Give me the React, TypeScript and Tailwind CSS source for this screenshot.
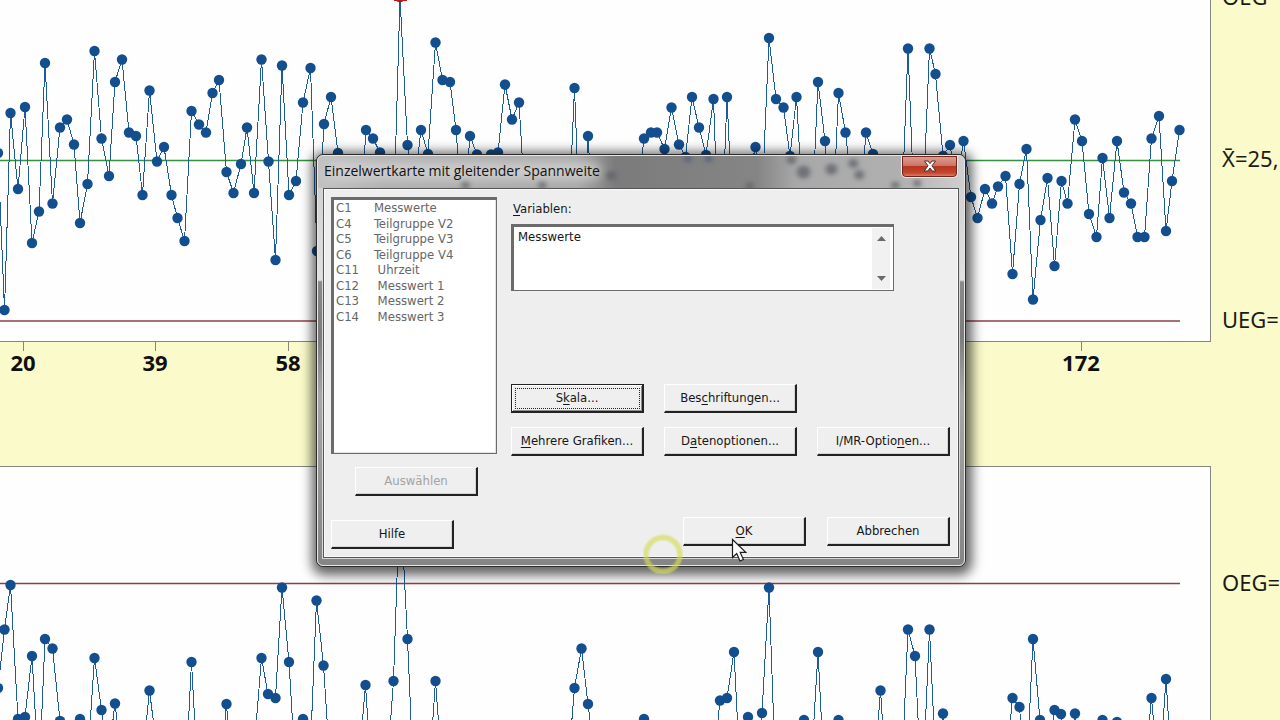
import type { ReactNode } from "react";

type Point = [number, number];

const individualValues: Point[] = [
  [-2, 153], [4.5, 310], [10.5, 113], [18, 189], [25, 107], [32, 243], [39, 211.5], [45, 63], [52.5, 203.5],
  [60, 127.5], [67, 119.5], [74, 144.5], [80, 223], [87.5, 184], [94.5, 51], [101.5, 138.5], [109, 176],
  [115, 82], [122, 59.5], [129, 132.5], [136, 136], [142.5, 195], [149.5, 90.5], [157, 161.5], [164, 147],
  [171.5, 195], [177.5, 218], [184.5, 241], [191.5, 111], [199, 124.5], [206, 132.5], [212.5, 93], [219, 80],
  [226.5, 172], [233.5, 193], [241, 164], [247, 127.5], [254, 193], [261.5, 59.5], [268.5, 161.5], [275.5, 260],
  [282, 65.5], [289, 195], [296, 181], [303, 102.5], [310.5, 68], [317, 251], [324, 124], [331, 97], [338, 153],
  [345, 170], [352, 210], [359, 240], [366, 130], [373, 138.5], [380, 152.5], [387, 180], [393, 240], [400, -3],
  [407.5, 145], [414, 190], [421, 130], [428, 154], [435.5, 42.5], [442.5, 80], [450, 82], [456, 130],
  [463, 220], [470, 136], [477, 154.5], [484, 160], [491, 154.5], [498, 152.5], [505, 84.5], [512, 119.5],
  [519, 102.5], [526, 220], [533, 200], [540, 180], [547, 210], [554, 190], [561, 200], [567, 260], [574.5, 88],
  [581, 260], [588, 136], [595, 250], [602, 190], [609, 200], [616, 180], [623, 210], [630, 190], [637, 200],
  [644, 138.5], [651, 132.5], [657, 132.5], [664.5, 149], [671.5, 107.5], [679, 144.5], [685.5, 157],
  [692, 97], [699, 127.5], [706, 155], [713.5, 99], [720, 280], [727, 97], [734, 250], [741, 200], [748, 180],
  [755.5, 147], [762, 200], [769, 38], [776, 99], [783.5, 107.5], [790, 156], [796.5, 97], [804, 230],
  [811, 240], [818, 82], [825, 141], [832, 240], [838.5, 93], [845.5, 132.5], [852, 190], [859, 220],
  [866, 132.5], [873, 154], [880, 165], [887, 190], [894, 180], [901, 230], [908, 48.5], [915, 230],
  [922, 230], [929.5, 48.5], [935.5, 74], [943, 156], [950, 145], [957, 185], [963.5, 141], [971, 197],
  [977.5, 218], [985, 189], [992, 203.5], [998, 186.5], [1005.5, 176], [1012.5, 274], [1019.5, 184],
  [1026.5, 149], [1033, 299.5], [1040.5, 220], [1047.5, 178], [1054.5, 266], [1061.5, 181], [1067.5, 203.5],
  [1075, 119.5], [1082, 141], [1089, 214], [1096.5, 237], [1102.5, 158], [1109.5, 218], [1117, 141],
  [1124, 192.5], [1131, 203.5], [1137.5, 237], [1144.5, 237], [1151.5, 138.5], [1159, 116], [1166, 231],
  [1172, 181], [1179.5, 130],
];

const movingRanges: Point[] = [
  [-2, 688], [4.5, 629.5], [10.5, 585], [18, 719], [25, 717], [32, 656], [39, 780], [45, 639], [52.5, 648.5],
  [60, 721], [67, 745], [74, 750], [80, 719], [87, 770], [94.5, 658], [101.5, 710], [108, 760], [115, 703.5],
  [122, 760], [136, 750], [142.5, 760], [149.5, 690.5], [157, 750], [185, 790], [191.5, 662], [199, 800],
  [206, 750], [219, 790], [226.5, 704], [233, 790], [247, 740], [254, 750], [261.5, 658], [268, 694],
  [275.5, 698], [282, 587.5], [289, 662], [296, 780], [303, 719], [310, 760], [316.5, 600.5], [323.5, 665.5],
  [331, 780], [359, 760], [365.5, 685], [373, 800], [387, 770], [393.5, 681], [400, 490], [407.5, 639],
  [414, 790], [428, 790], [435.5, 681], [442, 770], [450, 760], [567, 780], [574.5, 688], [581.5, 648.5],
  [588, 704], [595, 760], [637, 780], [644, 719], [651, 780], [713, 770], [720, 700.5], [727, 698],
  [734, 652], [741, 790], [748, 717], [755, 760], [762, 713], [769, 587.5], [776, 790], [797, 780],
  [804, 720], [811, 770], [818, 652], [825, 790], [832, 770], [838.5, 720], [845, 770], [873, 790],
  [880.5, 690.5], [887, 790], [901, 790], [908, 629.5], [915, 656], [922, 800], [929.5, 629.5], [936, 770],
  [943, 713.5], [950, 770], [1005, 780], [1012.5, 698], [1019.5, 707], [1026, 790], [1033, 639], [1040, 720],
  [1047, 780], [1054.5, 710], [1061, 714], [1068, 780], [1075, 713.5], [1082, 780], [1095, 780], [1102.5, 720],
  [1109, 780], [1117, 722], [1124, 780], [1144, 780], [1151.5, 698], [1159, 780], [1166, 679], [1173, 790],
];

const ticks = [
  { x: 23, label: "20" }, { x: 155, label: "39" }, { x: 288, label: "58" }, { x: 421, label: "77" },
  { x: 553, label: "96" }, { x: 685, label: "115" }, { x: 817, label: "134" }, { x: 946, label: "153" },
  { x: 1081, label: "172" },
];

function Series({ points }: { points: Point[] }) {
  return (
    <g>
      <polyline
        points={points.map((p) => p.join(",")).join(" ")}
        fill="none"
        stroke="#1d5c9c"
        strokeWidth="1"
        shapeRendering="crispEdges"
      />
      {points.map(([x, y]) => (
        <circle key={x} cx={x} cy={y} r="5.2" fill="#134f8f" />
      ))}
    </g>
  );
}

function DialogButton({
  children,
  className = "",
  disabled = false,
  focused = false,
}: {
  children: ReactNode;
  className?: string;
  disabled?: boolean;
  focused?: boolean;
}) {
  const edges = focused
    ? "border-t-[#222] border-l-[#222] shadow-[inset_1px_1px_0_#fff,inset_-1px_-1px_0_#8c8c8c] outline-1 -outline-offset-5 outline-dotted outline-[#222]"
    : "border-t-white border-l-white shadow-[inset_-1px_-1px_0_#d4d4d4]";
  return (
    <button
      type="button"
      disabled={disabled}
      className={`h-[29px] border-t border-l border-r-2 border-b-2 border-r-[#222] border-b-[#222] bg-[#efefef] text-[13px] leading-4 ${edges} ${
        disabled ? "text-[#a3a3a3]" : "text-[#161616]"
      } ${className}`}
    >
      {children}
    </button>
  );
}

const columns = [
  ["C1", "Messwerte", 6], ["C4", "Teilgruppe V2", 6], ["C5", "Teilgruppe V3", 6], ["C6", "Teilgruppe V4", 6],
  ["C11", "Uhrzeit", 5], ["C12", "Messwert 1", 5], ["C13", "Messwert 2", 5], ["C14", "Messwert 3", 5],
] as const;

function ControlChart() {
  return (
    <main className="flex h-full flex-col bg-[#fafacb]">
      <section className="flex h-[342px] shrink-0">
        <div className="min-w-0 flex-1 border-r border-b border-[#85857f] bg-[#fefefe]">
          <svg className="block h-full w-full" viewBox="0 0 1210 341" preserveAspectRatio="xMinYMin slice">
            <path d="M0 160.5H1180" stroke="#33913f" strokeWidth="1.4" />
            <path d="M0 321H1180" stroke="#8f3f48" strokeWidth="1.6" />
            <Series points={individualValues} />
            <path d="M394 0H407V1H394Z" fill="#c4161c" />
          </svg>
        </div>
        <div className="-mt-4 mb-[11px] flex w-[69px] flex-col justify-between pl-[11px] font-['Noto_Sans',sans-serif] text-[22px] leading-6 whitespace-nowrap text-[#1c1c16]">
          <span>OEG=</span>
          <span>X̄=25,</span>
          <span>UEG=</span>
        </div>
      </section>
      <div className="h-[124px] shrink-0">
        <svg className="block h-full w-full" viewBox="0 0 1280 124" preserveAspectRatio="xMinYMin slice">
          {ticks.map((t) => (
            <g key={t.label}>
              <path d={`M${t.x + 0.5} 0V9`} stroke="#85857f" />
              <text
                x={t.x}
                y="29"
                textAnchor="middle"
                className="fill-[#101010] font-['Noto_Sans',sans-serif] text-[22px] font-bold"
              >
                {t.label}
              </text>
            </g>
          ))}
        </svg>
      </div>
      <section className="flex min-h-0 flex-1">
        <div className="min-w-0 flex-1 border-t border-r border-[#85857f] bg-[#fefefe]">
          <svg className="block h-full w-full" viewBox="0 467 1210 253" preserveAspectRatio="xMinYMin slice">
            <path d="M0 583.5H1180" stroke="#8f3f48" strokeWidth="1.6" />
            <Series points={movingRanges} />
          </svg>
        </div>
        <div className="w-[69px] pt-[104px] pl-[11px] font-['Noto_Sans',sans-serif] text-[22px] leading-6 whitespace-nowrap text-[#1c1c16]">
          OEG=
        </div>
      </section>
    </main>
  );
}

function TitleBarTexture() {
  return (
    <svg className="absolute inset-0 h-full w-full" viewBox="0 0 648 34" preserveAspectRatio="none" aria-hidden="true">
      <defs>
        <linearGradient id="glass" x1="0" x2="1">
          <stop offset="0" stopColor="#c2c2c2" />
          <stop offset="0.1" stopColor="#b0b0b0" />
          <stop offset="0.4" stopColor="#a8a8a8" />
          <stop offset="0.46" stopColor="#7b7b7b" />
          <stop offset="0.68" stopColor="#858585" />
          <stop offset="0.74" stopColor="#a8a8a8" />
          <stop offset="0.9" stopColor="#b0b0b0" />
          <stop offset="1" stopColor="#cfcfcf" />
        </linearGradient>
        <filter id="soft" x="-50%" y="-50%" width="200%" height="200%">
          <feGaussianBlur stdDeviation="2.5" />
        </filter>
        <filter id="glow" x="-20%" y="-80%" width="140%" height="260%">
          <feGaussianBlur stdDeviation="6" />
        </filter>
      </defs>
      <rect width="648" height="34" fill="url(#glass)" />
      <rect x="8" y="7" width="276" height="18" rx="8" fill="#dadada" opacity="0.75" filter="url(#glow)" />
      <g filter="url(#soft)">
        <g fill="#5d6067" opacity="0.75">
          <circle cx="294" cy="21" r="5" />
          <circle cx="148" cy="31" r="4" />
          <circle cx="225" cy="31" r="4" />
          <circle cx="433" cy="32" r="4" />
          <circle cx="487" cy="17" r="7" />
          <circle cx="515" cy="14" r="6" />
          <circle cx="537" cy="8" r="5" />
          <circle cx="543" cy="20" r="5" />
          <circle cx="475" cy="4" r="5" />
          <circle cx="579" cy="31" r="4" />
          <circle cx="601" cy="29" r="4" />
        </g>
        <g fill="#44597a" opacity="0.8">
          <circle cx="371" cy="3" r="3.5" />
          <circle cx="392" cy="3" r="3.5" />
        </g>
      </g>
    </svg>
  );
}

function Dialog() {
  return (
    <div
      role="dialog"
      aria-labelledby="dialog-title"
      className="relative w-[650px] rounded-[7px] border border-[#2c2c2c] bg-[#8b8b8b] shadow-[1px_3px_12px_5px_rgba(0,0,0,0.62)]"
    >
      <div className="overflow-hidden rounded-[6px] border border-[#e6e6e6] bg-[linear-gradient(#cccccc_0,#e0e0e0_124px,#8a8a8a_126px,#7c7c7c_180px,#a8a8a8_240px,#858585_100%)] px-[5px] pb-[7px]">
        <header className="relative -mx-[5px] flex h-[32px] items-start justify-between">
          <TitleBarTexture />
          <h1
            id="dialog-title"
            className="relative pt-[5px] pl-[6px] font-['Open_Sans',sans-serif] text-[14px] leading-5 text-[#111]"
          >
            Einzelwertkarte mit gleitender Spannweite
          </h1>
          <button
            type="button"
            aria-label="Schließen"
            className="relative mr-[6px] flex h-[22px] w-[57px] items-center justify-center rounded-b-[5px] border border-t-0 border-[#ededed] bg-[linear-gradient(#dda093_0,#cf7667_45%,#b73521_50%,#c5452c_80%,#e28c74_100%)] shadow-[inset_0_0_0_1px_#70261d]"
          >
            <svg width="14" height="12" viewBox="0 0 14 12" aria-hidden="true">
              <path
                d="M1.5 1H5L7 3.6 9 1H12.5L9 5.8 12.8 11H9.2L7 8 4.8 11H1.2L5 5.8Z"
                fill="#fff"
                stroke="#4e2f2c"
                strokeWidth="1"
              />
            </svg>
          </button>
        </header>
        <div className="flex gap-[14px] border border-[#555] bg-[#eeeeee] pt-2 pr-2 pb-2 pl-[7px] font-['DejaVu_Sans_Condensed','DejaVu_Sans',sans-serif] shadow-[0_0_0_1px_#d8d8d8,inset_0_0_0_1px_#fafafa]">
          <div className="flex w-[166px] flex-col">
            <select
              multiple
              disabled
              aria-label="Spalten"
              className="h-[257px] w-full overflow-hidden rounded-none border-t-[3px] border-r border-b border-l-[3px] border-[#6b6b6b] bg-white p-0 pl-[2px] font-[inherit] text-[13px] opacity-100 shadow-[inset_-1px_-1px_0_#e3e3e3]"
            >
              {columns.map(([id, name, gap]) => (
                <option
                  key={id}
                  className="h-4 min-h-0 p-0 text-[13px] leading-4 text-[#666] even:h-[15px] even:leading-[15px]"
                >
                  {id + "\u00a0".repeat(gap) + name}
                </option>
              ))}
            </select>
            <DialogButton disabled className="mt-[13px] ml-6 w-[123px]">
              Auswählen
            </DialogButton>
            <DialogButton className="mt-6 w-[123px]">Hilfe</DialogButton>
          </div>
          <div className="flex min-w-0 flex-1 flex-col">
            <label htmlFor="variables" className="mt-1 ml-[2px] h-[23px] text-[13px] leading-4 text-[#161616]">
              <u className="underline-offset-2">V</u>ariablen:
            </label>
            <div className="flex h-[67px] w-[383px] border-t-[3px] border-r border-b border-l-[3px] border-[#6b6b6b] bg-white">
              <textarea
                id="variables"
                defaultValue="Messwerte"
                className="min-w-0 flex-1 resize-none overflow-hidden bg-white px-1 py-[2px] text-[13px] leading-4 text-[#161616] outline-none"
              />
              <div className="my-px mr-[3px] flex w-[18px] flex-col items-center justify-between bg-[#f1f1f1] py-2">
                <button type="button" aria-label="Nach oben" className="leading-none">
                  <svg className="block" width="9" height="5" viewBox="0 0 9 5">
                    <path d="M0 5L4.5 0 9 5Z" fill="#6a6a6a" />
                  </svg>
                </button>
                <button type="button" aria-label="Nach unten" className="leading-none">
                  <svg className="block" width="9" height="5" viewBox="0 0 9 5">
                    <path d="M0 0H9L4.5 5Z" fill="#6a6a6a" />
                  </svg>
                </button>
              </div>
            </div>
            <div className="mt-[93px] grid grid-cols-3 gap-x-[20px] gap-y-[14px]">
              <DialogButton focused>
                S<u className="underline-offset-2">k</u>ala...
              </DialogButton>
              <DialogButton>
                Bes<u className="underline-offset-2">c</u>hriftungen...
              </DialogButton>
              <span />
              <DialogButton>
                <u className="underline-offset-2">M</u>ehrere Grafiken...
              </DialogButton>
              <DialogButton>
                D<u className="underline-offset-2">a</u>tenoptionen...
              </DialogButton>
              <DialogButton>
                I/MR-Optio<u className="underline-offset-2">n</u>en...
              </DialogButton>
            </div>
            <div className="mt-[61px] flex justify-end gap-[21px]">
              <DialogButton className="w-[123px]">
                <u className="underline-offset-2">O</u>K
              </DialogButton>
              <DialogButton className="w-[123px]">Abbrechen</DialogButton>
            </div>
          </div>
        </div>
      </div>
      <svg
        className="pointer-events-none absolute top-[379px] left-[326px]"
        width="40"
        height="40"
        viewBox="0 0 40 40"
        aria-hidden="true"
      >
        <circle cx="20" cy="20.5" r="17" fill="none" stroke="#d5db58" strokeOpacity="0.3" strokeWidth="7" />
        <circle cx="20" cy="20.5" r="17" fill="none" stroke="#d5db58" strokeOpacity="0.5" strokeWidth="4" />
      </svg>
      <svg
        className="pointer-events-none absolute top-[383px] left-[414px]"
        width="17"
        height="25"
        viewBox="0 0 17 25"
        aria-hidden="true"
      >
        <path
          d="M1.5 1.5V19.5L5.7 15.6 9 23 12.4 21.5 9.2 14.4H14.8Z"
          fill="#fff"
          stroke="#1c1c1c"
          strokeWidth="1.2"
        />
      </svg>
    </div>
  );
}

export default function App() {
  return (
    <div className="relative h-screen overflow-hidden">
      <ControlChart />
      <div className="absolute inset-0 flex items-center justify-center pl-[2px]">
        <Dialog />
      </div>
    </div>
  );
}
